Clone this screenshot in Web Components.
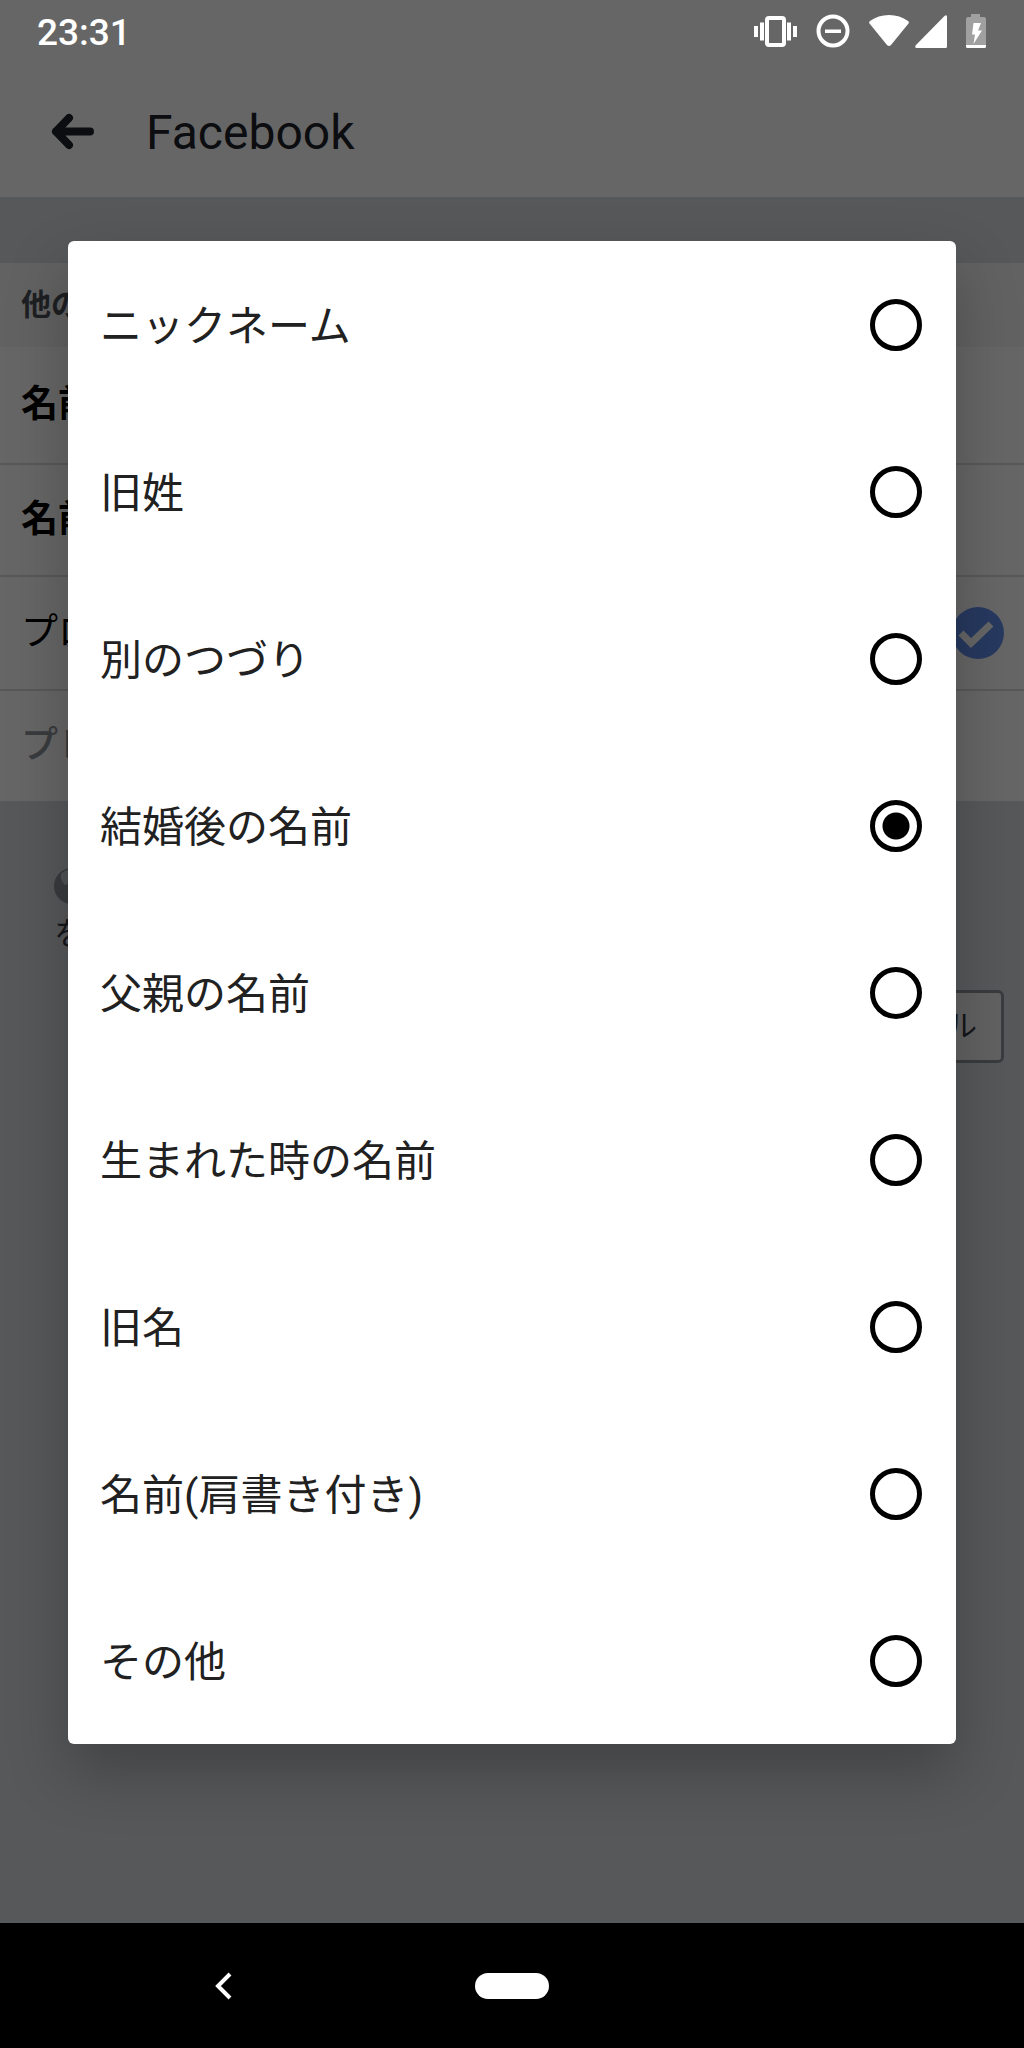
<!DOCTYPE html>
<html lang="ja">
<head>
<meta charset="utf-8">
<meta name="viewport" content="width=device-width, initial-scale=1">
<title>Facebook</title>
<style>
  body {
    margin: 0;
    font-family: Roboto, "Noto Sans CJK JP", sans-serif;
  }
</style>
</head>
<body>
<phone-screen>
  <status-bar slot="status">23:31</status-bar>
  <app-header>Facebook</app-header>
  <name-form>
    <form-row kind="title">他の</form-row>
    <form-row kind="name">名前</form-row>
    <form-row kind="strong">名前</form-row>
    <form-row kind="check">プロ</form-row>
    <form-row kind="muted">プレ</form-row>
  </name-form>
  <form-footer>を</form-footer>
  <choice-dialog slot="dialog">
    <radio-option>ニックネーム</radio-option>
    <radio-option>旧姓</radio-option>
    <radio-option>別のつづり</radio-option>
    <radio-option checked>結婚後の名前</radio-option>
    <radio-option>父親の名前</radio-option>
    <radio-option>生まれた時の名前</radio-option>
    <radio-option>旧名</radio-option>
    <radio-option>名前(肩書き付き)</radio-option>
    <radio-option>その他</radio-option>
  </choice-dialog>
  <nav-bar slot="nav"></nav-bar>
</phone-screen>

<script>
class PhoneScreen extends HTMLElement {
  constructor() {
    super();
    this.attachShadow({ mode: "open" });
    this.shadowRoot.innerHTML = `
      <style>
        :host {
          position: relative;
          display: flex;
          flex-direction: column;
          min-height: 100vh;
          background: #dadde1;
        }
        ::slotted([slot="status"]), ::slotted([slot="nav"]) {
          position: relative;
          z-index: 2;
        }
        main {
          flex: 1;
        }
        /* the scrim covers the app, the system bars stay on top of it */
        .scrim {
          position: absolute;
          inset: 0;
          z-index: 1;
          box-sizing: border-box;
          padding: 241px 68px 0;
          background: rgba(0, 0, 0, 0.6);
        }
      </style>
      <slot name="status"></slot>
      <main><slot></slot></main>
      <div class="scrim"><slot name="dialog"></slot></div>
      <slot name="nav"></slot>
    `;
  }
}

class StatusBar extends HTMLElement {
  constructor() {
    super();
    this.attachShadow({ mode: "open" });
    this.shadowRoot.innerHTML = `
      <style>
        :host {
          display: flex;
          align-items: center;
          justify-content: space-between;
          height: 64px;
          padding: 0 38px 0 37px;
          background: #666;
          color: #fff;
          font-size: 37px;
          font-weight: 500;
        }
        .icons {
          display: flex;
          gap: 19px;
        }
        .signal {
          display: flex;
          gap: 6px;
        }
        svg {
          display: block;
          fill: #fff;
        }
      </style>
      <slot></slot>
      <div class="icons">
        <svg width="43" height="36" viewBox="0 0 43 36" aria-hidden="true">
          <rect x="13" y="4" width="17" height="27" rx="2" fill="none" stroke="#fff" stroke-width="4"/>
          <path d="M0 12h4v11H0zM6 8.500h4v18H6zM33 8.500h4v18h-4zM39 12h4v11h-4z"/>
        </svg>
        <svg width="34" height="36" viewBox="0 0 34 36" aria-hidden="true">
          <circle cx="17" cy="17" r="14.500" fill="none" stroke="#fff" stroke-width="4"/>
          <path d="M9 15.500h16V19H9z"/>
        </svg>
        <div class="signal">
          <svg width="40" height="36" viewBox="0 0 40 36" aria-hidden="true">
            <path d="M1 7Q9 1 20 1T39 7Q40.500 8.500 39.500 9.500L22 31Q20 33 18 31L.500 9.500Q-.500 8.500 1 7z"/>
          </svg>
          <svg width="32" height="36" viewBox="0 0 32 36" aria-hidden="true">
            <path d="M29 2.500Q32 0 32 3V32.500Q32 34 30.500 34H2Q-1 34 1 31z"/>
          </svg>
        </div>
        <svg width="20" height="36" viewBox="0 0 20 36" aria-hidden="true">
          <path d="M5 0h9v3h4q2 0 2 2v26H0V5q0-2 2-2h3z" fill="#a0a0a0"/>
          <path d="M0 31h20v1.500q0 1.500-1.500 1.500h-17Q0 34 0 32.500z"/>
          <path d="M7.500 9H15l-3 7.500h4L7.500 30l1.500-9.500H6z"/>
        </svg>
      </div>
    `;
  }
}

class AppHeader extends HTMLElement {
  constructor() {
    super();
    this.attachShadow({ mode: "open" });
    this.shadowRoot.innerHTML = `
      <style>
        :host {
          display: flex;
          align-items: center;
          gap: 52px;
          height: 133px;
          padding: 0 48px;
          background: #fff;
          color: #1d2129;
        }
        button {
          padding: 0;
          border: 0;
          background: none;
          color: inherit;
        }
        svg {
          display: block;
        }
        h1 {
          margin: 0;
          padding-top: 4px;
          font-size: 48px;
          font-weight: 400;
          line-height: 56px;
        }
      </style>
      <button type="button" aria-label="戻る">
        <svg width="46" height="40" viewBox="0 0 46 40" fill="none" stroke="currentColor" stroke-width="8" stroke-linecap="round" stroke-linejoin="round" aria-hidden="true">
          <path d="M21 7L8 20.500 21 34M8 20.500H42"/>
        </svg>
      </button>
      <h1><slot></slot></h1>
    `;
  }
}

class NameForm extends HTMLElement {
  constructor() {
    super();
    this.attachShadow({ mode: "open" });
    this.shadowRoot.innerHTML = `
      <style>
        :host {
          display: block;
          margin-top: 66px;
          background: #fff;
        }
      </style>
      <slot></slot>
    `;
  }
}

class FormRow extends HTMLElement {
  constructor() {
    super();
    this.attachShadow({ mode: "open" });
    this.shadowRoot.innerHTML = `
      <style>
        :host {
          display: flex;
          align-items: center;
          justify-content: space-between;
          box-sizing: border-box;
          height: 112px;
          padding: 0 20px 0 21px;
          border-bottom: 2px solid #dadde1;
          color: #000;
          font-size: 37px;
          line-height: 48px;
        }
        :host([kind="title"]) {
          height: 84px;
          border: 0;
          background: #f5f6f7;
          color: #4b4f56;
          font-size: 30px;
          font-weight: 700;
        }
        :host([kind="name"]) {
          height: 118px;
        }
        :host([kind="name"]), :host([kind="strong"]) {
          font-weight: 700;
        }
        :host([kind="check"]) {
          height: 114px;
        }
        :host([kind="muted"]) {
          height: 110px;
          border: 0;
          color: #90949c;
          font-weight: 500;
        }
        input {
          display: none;
        }
        :host([kind="check"]) input {
          display: block;
          appearance: none;
          width: 52px;
          height: 52px;
          margin: 0;
          border-radius: 50%;
          background: #6390f0;
        }
        label {
          display: contents;
        }
        .box {
          display: grid;
        }
        .box > * {
          grid-area: 1 / 1;
        }
        svg {
          display: none;
          pointer-events: none;
        }
        :host([kind="check"]) svg {
          display: block;
        }
      </style>
      <label>
        <slot></slot>
        <span class="box">
          <input type="checkbox" checked>
          <svg width="52" height="52" viewBox="0 0 52 52" fill="none" stroke="#fff" stroke-width="7" aria-hidden="true">
            <path d="M9 26l10 10L39 17"/>
          </svg>
        </span>
      </label>
    `;
    this.box = this.shadowRoot.querySelector(".box");
  }

  connectedCallback() {
    // only the tick row keeps its box
    if (this.getAttribute("kind") !== "check") this.box.remove();
  }
}

class FormFooter extends HTMLElement {
  constructor() {
    super();
    this.attachShadow({ mode: "open" });
    this.shadowRoot.innerHTML = `
      <style>
        :host {
          display: block;
          padding: 67px 20px 0;
          color: #373b42;
          font-size: 32px;
          line-height: 44px;
        }
        p {
          margin: 0 34px 34px;
        }
        svg {
          display: block;
          margin-bottom: 8px;
        }
        button {
          display: block;
          margin-left: auto;
          height: 73px;
          padding: 0 24px 8px;
          border: 3px solid #90949c;
          border-radius: 6px;
          background: #f5f6f7;
          color: #373b42;
          font: 30px Roboto, "Noto Sans CJK JP", sans-serif;
        }
      </style>
      <p>
        <svg width="36" height="36" viewBox="0 0 36 36" aria-hidden="true">
          <circle cx="18" cy="18" r="18" fill="#90949c"/>
          <path d="M7 6Q12 1 18 1q10 0 14 8l-8 8-8-2-5 2Q6 13 7 6z" fill="#ccd0d5"/>
        </svg>
        <slot></slot>
      </p>
      <button type="button">キャンセル</button>
    `;
  }
}

class ChoiceDialog extends HTMLElement {
  constructor() {
    super();
    this.attachShadow({ mode: "open" });
    this.shadowRoot.innerHTML = `
      <style>
        :host {
          display: block;
          border-radius: 6px;
          background: #fff;
          box-shadow: 0 28px 60px rgba(0, 0, 0, 0.25);
        }
      </style>
      <div role="radiogroup" aria-label="名前のタイプ"><slot></slot></div>
    `;
  }

  connectedCallback() {
    this.addEventListener("option-pick", (e) => this.pick(e.target));
  }

  pick(option) {
    this.querySelectorAll("radio-option").forEach((el) => {
      el.input.checked = el === option;
    });
  }
}

class RadioOption extends HTMLElement {
  constructor() {
    super();
    this.attachShadow({ mode: "open" });
    this.shadowRoot.innerHTML = `
      <style>
        :host {
          display: block;
        }
        label {
          display: flex;
          align-items: center;
          justify-content: space-between;
          height: 167px;
          padding: 0 34px 0 32px;
          color: #212121;
          font-size: 42px;
          line-height: 60px;
        }
        span {
          padding-top: 4px;
        }
        input {
          appearance: none;
          box-sizing: border-box;
          width: 52px;
          height: 52px;
          margin: 0;
          border: 5px solid #000;
          border-radius: 50%;
        }
        input:checked {
          background: radial-gradient(circle, #000 13px, transparent 14px);
        }
      </style>
      <label>
        <span><slot></slot></span>
        <input type="radio">
      </label>
    `;
    this.input = this.shadowRoot.querySelector("input");
  }

  connectedCallback() {
    this.input.checked = this.hasAttribute("checked");
    this.input.addEventListener("change", () => {
      this.dispatchEvent(new CustomEvent("option-pick", { bubbles: true }));
    });
  }
}

class NavBar extends HTMLElement {
  constructor() {
    super();
    this.attachShadow({ mode: "open" });
    this.shadowRoot.innerHTML = `
      <style>
        :host {
          display: grid;
          grid-template-columns: 1fr auto 1fr;
          align-items: center;
          height: 125px;
          background: #000;
        }
        button {
          padding: 0;
          border: 0;
          background: none;
        }
        .back {
          justify-self: center;
          margin-right: 30px;
        }
        .home {
          width: 74px;
          height: 26px;
          border-radius: 13px;
          background: #fff;
        }
        svg {
          display: block;
        }
      </style>
      <button class="back" type="button" aria-label="戻る">
        <svg width="28" height="28" viewBox="0 0 28 28" fill="none" stroke="#fff" stroke-width="4" aria-hidden="true">
          <path d="M21 2L9 14l12 12"/>
        </svg>
      </button>
      <button class="home" type="button" aria-label="ホーム"></button>
    `;
  }
}

customElements.define("phone-screen", PhoneScreen);
customElements.define("status-bar", StatusBar);
customElements.define("app-header", AppHeader);
customElements.define("name-form", NameForm);
customElements.define("form-row", FormRow);
customElements.define("form-footer", FormFooter);
customElements.define("choice-dialog", ChoiceDialog);
customElements.define("radio-option", RadioOption);
customElements.define("nav-bar", NavBar);
</script>
</body>
</html>
